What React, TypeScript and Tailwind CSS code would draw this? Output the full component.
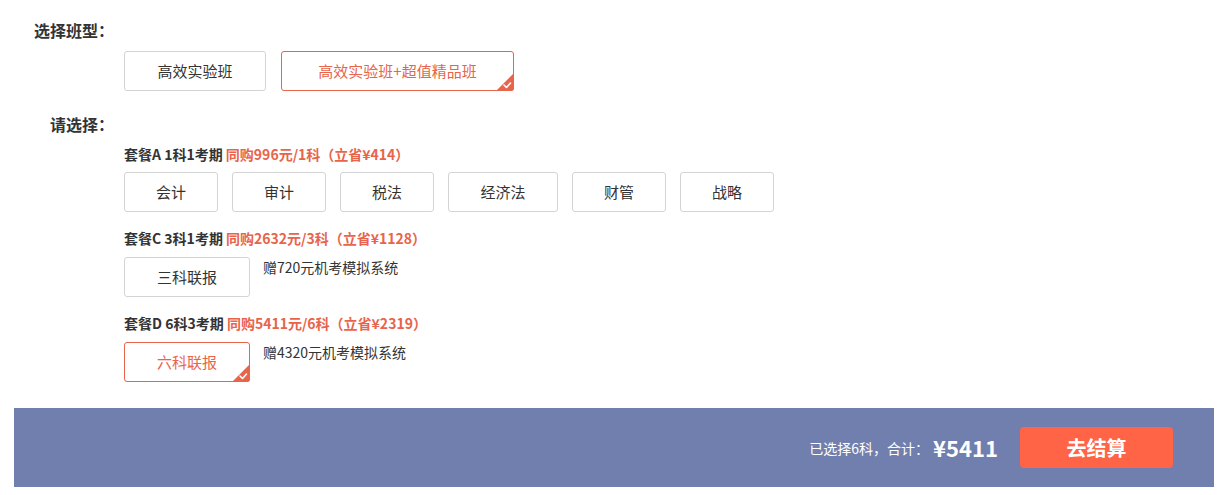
import { useState } from "react";

const FONT = { fontFamily: '"Microsoft YaHei", "Noto Sans CJK SC", "Noto Sans", sans-serif' };

function Corner() {
  return (
    <svg
      className="absolute -right-px -bottom-px"
      width="18"
      height="18"
      viewBox="0 0 18 18"
    >
      <path d="M18 0 L18 15 Q18 18 15 18 L0 18 Z" fill="#e8644b" />
      <path d="M8 12 L10.5 14.5 L14.5 10" stroke="#fff" strokeWidth="1.6" fill="none" strokeLinecap="round" strokeLinejoin="round" />
    </svg>
  );
}

function Option({
  label,
  width,
  active,
  onClick,
}: {
  label: string;
  width: string;
  active?: boolean;
  onClick?: () => void;
}) {
  return (
    <button
      onClick={onClick}
      className={`relative h-10 ${width} rounded-[3px] border text-[15px] bg-white ${
        active ? "border-[#e8644b] text-[#e8644b]" : "border-[#d4d4d4] text-[#333]"
      }`}
    >
      {label}
      {active && <Corner />}
    </button>
  );
}

function Heading({ name, price }: { name: string; price: string }) {
  return (
    <div className="h-5 leading-5 text-sm font-bold text-[#333]">
      {name} <span className="text-[#e8644b]">{price}</span>
    </div>
  );
}

export default function App() {
  const [course, setCourse] = useState(1);
  const [pkg, setPkg] = useState("six");

  const subjects = [
    { name: "会计", w: "w-[94px]" },
    { name: "审计", w: "w-[94px]" },
    { name: "税法", w: "w-[94px]" },
    { name: "经济法", w: "w-[110px]" },
    { name: "财管", w: "w-[94px]" },
    { name: "战略", w: "w-[94px]" },
  ];

  return (
    <div className="w-[1224px] h-[495px] bg-white pt-[18px]" style={FONT}>
      <div className="w-[114px] text-right text-base font-bold leading-6 text-[#333]">选择班型：</div>
      <div className="flex gap-[15px] pl-[124px] mt-[9px]">
        <Option label="高效实验班" width="w-[142px]" active={course === 0} onClick={() => setCourse(0)} />
        <Option label="高效实验班+超值精品班" width="w-[233px]" active={course === 1} onClick={() => setCourse(1)} />
      </div>

      <div className="w-[114px] text-right text-base font-bold leading-6 text-[#333] mt-[21px]">请选择：</div>

      <div className="pl-[124px] mt-2">
        <Heading name="套餐A 1科1考期" price="同购996元/1科（立省¥414）" />
        <div className="flex gap-[14px] mt-2">
          {subjects.map((s) => (
            <Option key={s.name} label={s.name} width={s.w} active={pkg === s.name} onClick={() => setPkg(s.name)} />
          ))}
        </div>

        <div className="mt-[16px]">
          <Heading name="套餐C 3科1考期" price="同购2632元/3科（立省¥1128）" />
        </div>
        <div className="flex gap-[13px] mt-[9px]">
          <Option label="三科联报" width="w-[126px]" active={pkg === "three"} onClick={() => setPkg("three")} />
          <span className="text-sm leading-5 text-[#333]">赠720元机考模拟系统</span>
        </div>

        <div className="mt-[16px]">
          <Heading name="套餐D 6科3考期" price="同购5411元/6科（立省¥2319）" />
        </div>
        <div className="flex gap-[13px] mt-[9px]">
          <Option label="六科联报" width="w-[126px]" active={pkg === "six"} onClick={() => setPkg("six")} />
          <span className="text-sm leading-5 text-[#333]">赠4320元机考模拟系统</span>
        </div>
      </div>

      <div className="ml-[14px] w-[1200px] mt-[26px] h-[79px] bg-[#717fae] flex items-center justify-end pr-[41px]">
        <span className="text-sm text-white">已选择6科，合计：</span>
        <span className="text-[22px] font-bold text-white ml-1">¥5411</span>
        <button className="ml-[22px] w-[153px] h-[41px] rounded bg-[#ff6446] text-white text-xl font-bold">
          去结算
        </button>
      </div>
    </div>
  );
}
